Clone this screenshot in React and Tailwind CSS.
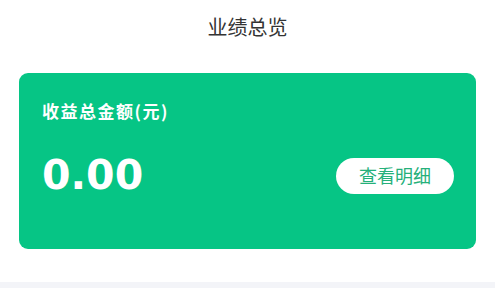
import React from 'react';

const cjk = { fontFamily: '"Noto Sans CJK SC", "Noto Sans", sans-serif' };

const App = () => {
  return (
    <div className="w-[495px] h-[288px] bg-white flex flex-col" style={cjk}>
      {/* header */}
      <div className="h-[52px] flex items-center justify-center pt-[1px]">
        <span className="text-[20px] leading-none text-[#333333]">业绩总览</span>
      </div>

      <div className="px-[19px] pt-[21px]">
        <div className="h-[176px] rounded-[9px] bg-[#06c585] pl-[23px] pr-[22px] pt-[27px]">
          <div className="text-[17px] leading-[22px] font-bold tracking-[1.5px] text-white">收益总金额(元)</div>
          <div className="mt-[33px] flex items-center justify-between">
            <span
              className="text-[41px] leading-none font-bold text-white"
              style={{ fontFamily: '"DejaVu Sans", sans-serif' }}
            >
              0.00
            </span>
            <button className="w-[118px] h-[36px] rounded-full bg-white text-[18px] text-[#25b07a] flex items-center justify-center">
              查看明细
            </button>
          </div>
        </div>
      </div>

      <div className="flex-1" />
      <div className="h-[6px] bg-[#f3f4f8]" />
    </div>
  );
};

export default App;
